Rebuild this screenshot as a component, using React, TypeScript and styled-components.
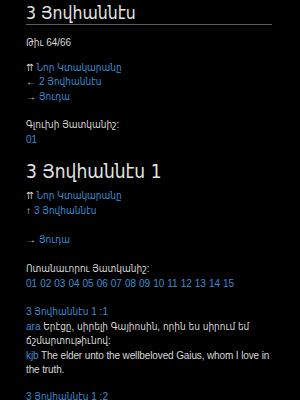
import * as React from 'react'
import styled, { createGlobalStyle } from 'styled-components'

const GlobalStyle = createGlobalStyle`
    html, body {
        margin: 0;
        padding: 0;
        background: #000;
    }
    body {
        font-family: "Liberation Sans", "DejaVu Sans Condensed", sans-serif;
        color: #d8d8d8;
        font-size: 10px;
        line-height: 14.5px;
    }
`

const Page = styled.div`
    padding: 0 28px 0 26px;
`

const Title = styled.h1`
    margin: 0;
    padding: 3px 0 1px;
    font-family: "DejaVu Sans Condensed", "DejaVu Sans", sans-serif;
    font-stretch: condensed;
    font-size: 17.5px;
    line-height: 20px;
    font-weight: normal;
    color: #e4e4e4;
    border-bottom: 1px solid #5c5c5c;
`

const Heading = styled.h2`
    margin: 13px 0 7px;
    font-family: "DejaVu Sans Condensed", "DejaVu Sans", sans-serif;
    font-stretch: condensed;
    font-size: 19px;
    line-height: 22px;
    font-weight: normal;
    color: #e4e4e4;
`

const Block = styled.div<{ gap?: number }>`
    margin-top: ${(p) => p.gap ?? 14}px;
`

const Nav = styled.div`
    display: flex;
    flex-direction: column;
`

const Link = styled.a`
    color: #3a8ed4;
    text-decoration: none;
`

const Arrow = styled.span`
    color: #d8d8d8;
    margin-right: 3px;
`

const English = styled.span`
    letter-spacing: -0.12px;
`

const Numbers = styled.div`
    display: flex;
    flex-wrap: wrap;
    column-gap: 3px;
`

const verses = Array.from({ length: 15 }, (_, i) => String(i + 1).padStart(2, '0'))

const App = () => {
    return (
        <Page>
            <GlobalStyle />
            <Title>3 Յովհաննէս</Title>
            <Block gap={11}>Թիւ 64/66</Block>
            <Block gap={10}>
                <Nav>
                    <span><Arrow>⇈</Arrow><Link>Նոր Կտակարանը</Link></span>
                    <span><Arrow>←</Arrow><Link>2 Յովհաննէս</Link></span>
                    <span><Arrow>→</Arrow><Link>Յուդա</Link></span>
                </Nav>
            </Block>
            <Block gap={14}>
                <div>Գլուխի Յատկանիշ:</div>
                <Link>01</Link>
            </Block>
            <Heading>3 Յովհաննէս 1</Heading>
            <Nav>
                <span><Arrow>⇈</Arrow><Link>Նոր Կտակարանը</Link></span>
                <span><Arrow>↑</Arrow><Link>3 Յովհաննէս</Link></span>
                <span>&nbsp;</span>
                <span><Arrow>→</Arrow><Link>Յուդա</Link></span>
            </Nav>
            <Block gap={15}>
                <div>Ոտանաւորու Յատկանիշ:</div>
                <Numbers>
                    {verses.map((v) => <Link key={v}>{v}</Link>)}
                </Numbers>
            </Block>
            <Block gap={14}>
                <Link>3 Յովհաննէս 1 :1</Link><br />
                <Link>ara</Link> Երէցը, սիրելի Գայիոսին, որին ես սիրում եմ ճշմարտութիւնով:<br />
                <English>
                    <Link>kjb</Link> The elder unto the wellbeloved Gaius, whom I love in the truth.
                </English>
            </Block>
            <Block gap={12}>
                <Link>3 Յովհաննէս 1 :2</Link>
            </Block>
        </Page>
    )
}

export default App
